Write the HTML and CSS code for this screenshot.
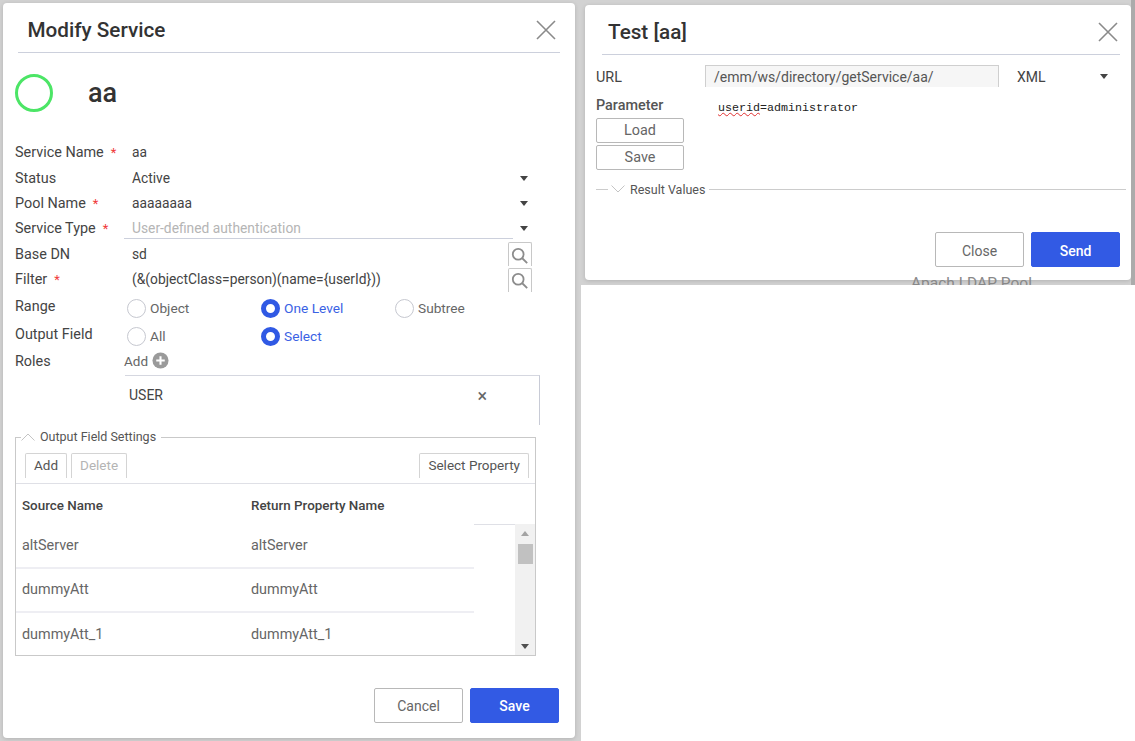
FILE: index.html
```html
<!DOCTYPE html>
<html lang="en">
<head>
    <meta charset="UTF-8">
    <title>Modify Service</title>
    <link rel="stylesheet" href="styles.css">
</head>
<body>
    <div class="desk">
        <div class="backdrop backdrop-left">
            <div class="modal modal-service">
                <div class="modal-head">
                    <h2>Modify Service</h2>
                    <svg class="close-icon" viewBox="0 0 20 20"><path d="M1 1L19 19M19 1L1 19"/></svg>
                </div>
                <div class="service-title">
                    <span class="status-ring"></span>
                    <span class="service-name">aa</span>
                </div>
                <div class="form">
                    <div class="row">
                        <label>Service Name<i>*</i></label>
                        <div class="value">aa</div>
                    </div>
                    <div class="row">
                        <label>Status</label>
                        <div class="value select">Active<span class="arrow"></span></div>
                    </div>
                    <div class="row">
                        <label>Pool Name<i>*</i></label>
                        <div class="value select">aaaaaaaa<span class="arrow"></span></div>
                    </div>
                    <div class="row">
                        <label>Service Type<i>*</i></label>
                        <div class="value select disabled">User-defined authentication<span class="arrow"></span></div>
                    </div>
                    <div class="row">
                        <label>Base DN</label>
                        <div class="value">sd</div>
                        <button class="search-btn" type="button">
                            <svg viewBox="0 0 20 20"><circle cx="8" cy="8" r="6"/><path d="M12.5 12.5L18 18"/></svg>
                        </button>
                    </div>
                    <div class="row">
                        <label>Filter<i>*</i></label>
                        <div class="value">(&amp;(objectClass=person)(name={userId}))</div>
                        <button class="search-btn" type="button">
                            <svg viewBox="0 0 20 20"><circle cx="8" cy="8" r="6"/><path d="M12.5 12.5L18 18"/></svg>
                        </button>
                    </div>
                    <div class="row row-radio">
                        <label>Range</label>
                        <div class="radios">
                            <span class="radio"><b></b>Object</span>
                            <span class="radio on"><b></b>One Level</span>
                            <span class="radio"><b></b>Subtree</span>
                        </div>
                    </div>
                    <div class="row row-radio">
                        <label>Output Field</label>
                        <div class="radios">
                            <span class="radio"><b></b>All</span>
                            <span class="radio on"><b></b>Select</span>
                        </div>
                    </div>
                    <div class="row row-roles">
                        <label>Roles</label>
                        <div class="add-role">Add
                            <svg viewBox="0 0 18 18"><circle cx="9" cy="9" r="8.5"/><path d="M9 4.5V13.5M4.5 9H13.5"/></svg>
                        </div>
                    </div>
                </div>
                <div class="role-list">
                    <span>USER</span>
                    <span class="role-x">×</span>
                </div>
                <div class="fieldset">
                    <div class="legend">
                        <svg viewBox="0 0 14 8"><path d="M0.5 7.5L7 1L13.5 7.5"/></svg>
                        <span>Output Field Settings</span>
                    </div>
                    <div class="toolbar">
                        <button class="tool" type="button">Add</button>
                        <button class="tool off" type="button">Delete</button>
                        <button class="tool push" type="button">Select Property</button>
                    </div>
                    <div class="table-head">
                        <span class="col-a">Source Name</span>
                        <span>Return Property Name</span>
                    </div>
                    <div class="table-body">
                        <div class="table-rows">
                            <div class="table-row"><span class="col-a">altServer</span><span>altServer</span></div>
                            <div class="table-row"><span class="col-a">dummyAtt</span><span>dummyAtt</span></div>
                            <div class="table-row"><span class="col-a">dummyAtt_1</span><span>dummyAtt_1</span></div>
                        </div>
                        <div class="head-gap"></div>
                        <div class="scrollbar">
                            <span class="sb-up"></span>
                            <span class="sb-thumb"></span>
                            <span class="sb-down"></span>
                        </div>
                    </div>
                </div>
                <div class="modal-foot">
                    <button class="btn" type="button">Cancel</button>
                    <button class="btn primary" type="button">Save</button>
                </div>
            </div>
        </div>

        <div class="right-side">
            <div class="backdrop backdrop-right">
                <div class="modal modal-test">
                    <div class="modal-head">
                        <h2>Test [aa]</h2>
                        <svg class="close-icon" viewBox="0 0 20 20"><path d="M1 1L19 19M19 1L1 19"/></svg>
                    </div>
                    <div class="test-url">
                        <label>URL</label>
                        <div class="url-field">/emm/ws/directory/getService/aa/</div>
                        <div class="url-type">XML<span class="arrow"></span></div>
                    </div>
                    <div class="test-param">
                        <div class="param-side">
                            <label>Parameter</label>
                            <button class="small-btn" type="button">Load</button>
                            <button class="small-btn" type="button">Save</button>
                        </div>
                        <div class="param-text"><span class="spell">userid</span>=administrator</div>
                    </div>
                    <div class="result-legend">
                        <span class="dash"></span>
                        <svg viewBox="0 0 14 8"><path d="M0.5 0.5L7 7L13.5 0.5"/></svg>
                        <span class="result-text">Result Values</span>
                        <span class="rule"></span>
                    </div>
                    <div class="modal-foot">
                        <button class="btn" type="button">Close</button>
                        <button class="btn primary" type="button">Send</button>
                    </div>
                </div>
                <div class="behind-text">Apach LDAP Pool</div>
            </div>
        </div>
    </div>
</body>
</html>
```

FILE: styles.css
```css
* {
    box-sizing: border-box;
}

body {
    margin: 0;
    background-color: #fff;
    font-family: Roboto, "Liberation Sans", sans-serif;
    font-size: 14px;
    color: #444;
}

.desk {
    display: flex;
    width: 1135px;
    height: 741px;
    overflow: hidden;
}

.backdrop {
    background-color: #d2d2d2;
}

.backdrop-left {
    width: 581px;
    height: 741px;
    padding: 3px 6px 3px 3px;
}

.right-side {
    width: 554px;
}

.backdrop-right {
    position: relative;
    height: 285px;
    padding: 5px 0 5px 4px;
    border-right: 4px solid #ababab;
    overflow: hidden;
}

.modal {
    background-color: #fff;
    border-radius: 4px;
    box-shadow: 0 1px 4px rgba(0, 0, 0, 0.15);
}

.modal-service {
    height: 735px;
    padding: 0 12px;
}

.modal-test {
    height: 275px;
    padding: 0 11px;
}

.modal-head {
    display: flex;
    align-items: center;
    justify-content: space-between;
    height: 50px;
    margin: 0 3px 0 3px;
    padding: 4px 4px 0 9.5px;
    border-bottom: 1px solid #ccd0dc;
}

.modal-test .modal-head {
    margin: 0 0 0 6px;
    height: 50px;
    padding: 4px 2px 0 6px;
}

.modal-head h2 {
    margin: 0;
    font-size: 20.7px;
    font-weight: 500;
    color: #333;
}

.close-icon {
    width: 20px;
    height: 20px;
}

.close-icon path {
    fill: none;
    stroke: #8a8a8a;
    stroke-width: 1.6;
}

.service-title {
    display: flex;
    align-items: center;
    height: 79px;
}

.status-ring {
    width: 38px;
    height: 38px;
    border: 3.5px solid #4ce566;
    border-radius: 50%;
}

.service-name {
    margin-left: 35px;
    font-size: 27px;
    font-weight: 500;
    color: #333;
}

.form {
    margin-top: 8px;
}

.row {
    display: flex;
    align-items: center;
    height: 25.4px;
}

.row label {
    width: 109px;
    flex-shrink: 0;
    font-size: 14.4px;
    color: #444;
}

.row label i {
    margin-left: 7px;
    font-size: 13px;
    font-style: normal;
    color: #f03a3a;
}

.value {
    position: relative;
    flex: 1;
    height: 25px;
    line-height: 25px;
    padding-left: 8px;
    font-size: 13.8px;
}

.select {
    width: 405px;
    flex: none;
}

.disabled {
    align-self: flex-start;
    width: 389px;
    height: 23px;
    line-height: 24px;
    border-bottom: 1px solid #ccd0dc;
    color: #b5b5b5;
}

.arrow {
    position: absolute;
    right: 1px;
    top: 10px;
    width: 0;
    height: 0;
    border-left: 4.5px solid transparent;
    border-right: 4.5px solid transparent;
    border-top: 5px solid #444;
}

.disabled .arrow {
    right: -15px;
}

.search-btn {
    width: 24px;
    height: 24px;
    margin-right: 31px;
    padding: 0;
    background: #fff;
    border: 1px solid #c8c8c8;
    border-bottom: none;
    border-radius: 2px 2px 0 0;
}

.search-btn svg {
    display: block;
    width: 18px;
    height: 18px;
    margin: 2px auto 0;
}

.search-btn circle,
.search-btn path {
    fill: none;
    stroke: #8c8c8c;
    stroke-width: 2;
}

.row-radio {
    height: 28px;
}

.radios {
    display: flex;
    margin-top: 4px;
    padding-left: 3px;
}

.radio {
    display: flex;
    align-items: center;
    width: 134px;
    font-size: 13.7px;
    color: #666;
}

.radio b {
    width: 19px;
    height: 19px;
    margin-right: 4px;
    background-color: #fff;
    border: 1px solid #c6c8d0;
    border-radius: 50%;
}

.radio.on {
    color: #3a62e4;
}

.radio.on b {
    border: 5px solid #3059e4;
}

.row-roles {
    height: 26.6px;
}

.add-role {
    display: flex;
    align-items: center;
    gap: 4px;
    margin-top: -2px;
    font-size: 13.5px;
    color: #666;
}

.add-role svg {
    width: 17px;
    height: 17px;
}

.add-role circle {
    fill: #9a9a9a;
}

.add-role path {
    fill: none;
    stroke: #fff;
    stroke-width: 2.2;
}

.role-list {
    display: flex;
    align-items: center;
    justify-content: space-between;
    height: 50px;
    width: 415px;
    margin: 0 0 0 110px;
    padding: 0 52px 10px 4px;
    border-top: 1px solid #d5d7e0;
    border-right: 1px solid #c8cbd6;
}

.role-x {
    font-size: 18px;
    color: #666;
}

.fieldset {
    width: 521px;
    height: 219px;
    margin-top: 12px;
    border: 1px solid #c9c9c9;
}

.legend {
    display: flex;
    align-items: center;
    width: max-content;
    height: 14px;
    margin: -8px 0 0 5px;
    padding-right: 5px;
    background-color: #fff;
    font-size: 12.5px;
    color: #555;
}

.legend svg,
.result-legend svg {
    width: 14px;
    height: 8px;
    margin-right: 5px;
}

.legend path,
.result-legend path {
    fill: none;
    stroke: #c4c4c4;
    stroke-width: 1;
}

.toolbar {
    display: flex;
    gap: 4px;
    height: 40px;
    padding: 9px 6px 0 9px;
    border-bottom: 1px solid #dfe0e6;
}

.tool {
    height: 25px;
    padding: 0 8px 2px;
    background-color: #fff;
    border: 1px solid #d4d4d4;
    border-bottom: none;
    border-radius: 2px 2px 0 0;
    font-family: inherit;
    font-size: 13.5px;
    color: #555;
}

.tool.off {
    color: #b4b4b4;
}

.tool.push {
    margin-left: auto;
}

.table-head {
    display: flex;
    align-items: center;
    height: 40px;
    padding: 4px 0 0 6px;
    font-size: 13.4px;
    font-weight: 500;
    color: #444;
}

.col-a {
    width: 229px;
}

.table-body {
    display: flex;
    height: 131px;
}

.table-rows {
    width: 458px;
}

.table-row {
    display: flex;
    align-items: center;
    height: 44px;
    padding: 0 0 1px 6px;
    border-bottom: 2px solid #eeeef3;
    font-size: 14.4px;
    color: #666;
}

.table-row:first-child {
    height: 45px;
    padding-bottom: 0;
}

.table-row:last-child {
    border-bottom: none;
}

.head-gap {
    width: 41px;
    border-top: 1px solid #dfe0e6;
}

.scrollbar {
    display: flex;
    flex-direction: column;
    align-items: center;
    width: 20px;
    background-color: #f1f1f1;
}

.sb-up {
    margin-top: 7px;
    border-left: 4px solid transparent;
    border-right: 4px solid transparent;
    border-bottom: 5px solid #a3a3a3;
}

.sb-thumb {
    width: 15px;
    height: 20px;
    margin-top: 8px;
    background-color: #c1c1c1;
}

.sb-down {
    margin-top: auto;
    margin-bottom: 6px;
    border-left: 4px solid transparent;
    border-right: 4px solid transparent;
    border-top: 5px solid #505050;
}

.modal-foot {
    display: flex;
    justify-content: flex-end;
    gap: 7px;
    margin-top: 32px;
    padding-right: 4px;
}

.btn {
    width: 89px;
    height: 35px;
    padding-top: 3px;
    background-color: #fff;
    border: 1px solid #b8b8b8;
    border-radius: 2px;
    font-family: inherit;
    font-size: 14px;
    color: #666;
}

.btn.primary {
    background-color: #325ae4;
    border-color: #325ae4;
    font-weight: 500;
    color: #fff;
}

.test-url {
    position: relative;
    display: flex;
    align-items: center;
    height: 22px;
    margin-top: 10px;
}

.test-url label {
    width: 109px;
    flex-shrink: 0;
    margin-top: 2px;
    font-size: 14.4px;
}

.url-field {
    width: 294px;
    height: 22px;
    line-height: 23px;
    padding-left: 8px;
    background-color: #f6f6f6;
    border: 1px solid #cfcfcf;
    border-bottom: none;
    color: #555;
}

.url-type {
    position: relative;
    width: 97px;
    margin: 2px 0 0 18px;
}

.url-type .arrow {
    top: 5px;
    right: 6px;
}

.test-param {
    display: flex;
    margin-top: 9px;
}

.param-side {
    display: flex;
    flex-direction: column;
    width: 88px;
}

.param-side label {
    height: 22px;
    line-height: 20px;
    font-weight: 500;
    font-size: 14.4px;
    color: #555;
}

.small-btn {
    width: 88px;
    height: 25px;
    margin-bottom: 2px;
    padding: 0 0 1px;
    background-color: #fff;
    border: 1px solid #b8b8b8;
    border-radius: 2px;
    font-family: inherit;
    font-size: 14.4px;
    color: #666;
}

.param-text {
    margin: 5px 0 0 34px;
    font-family: "Liberation Mono", monospace;
    font-size: 11.67px;
    color: #222;
}

.spell {
    text-decoration: underline wavy #e03030;
    text-decoration-thickness: 1px;
}

.result-legend {
    display: flex;
    align-items: center;
    height: 14px;
    margin-top: 10px;
    font-size: 12.5px;
    color: #555;
}

.dash {
    width: 12px;
    border-top: 1px solid #ccc;
    margin-right: 3px;
}

.result-text {
    margin-right: 4px;
}

.rule {
    flex: 1;
    border-top: 1px solid #ccc;
    margin-right: -6px;
}

.modal-test .modal-foot {
    margin-top: 36px;
    padding-right: 0;
}

/* text of the page under the dialog */
.behind-text {
    position: absolute;
    left: 330px;
    top: 274px;
    font-size: 15.5px;
    color: #888;
}
```
